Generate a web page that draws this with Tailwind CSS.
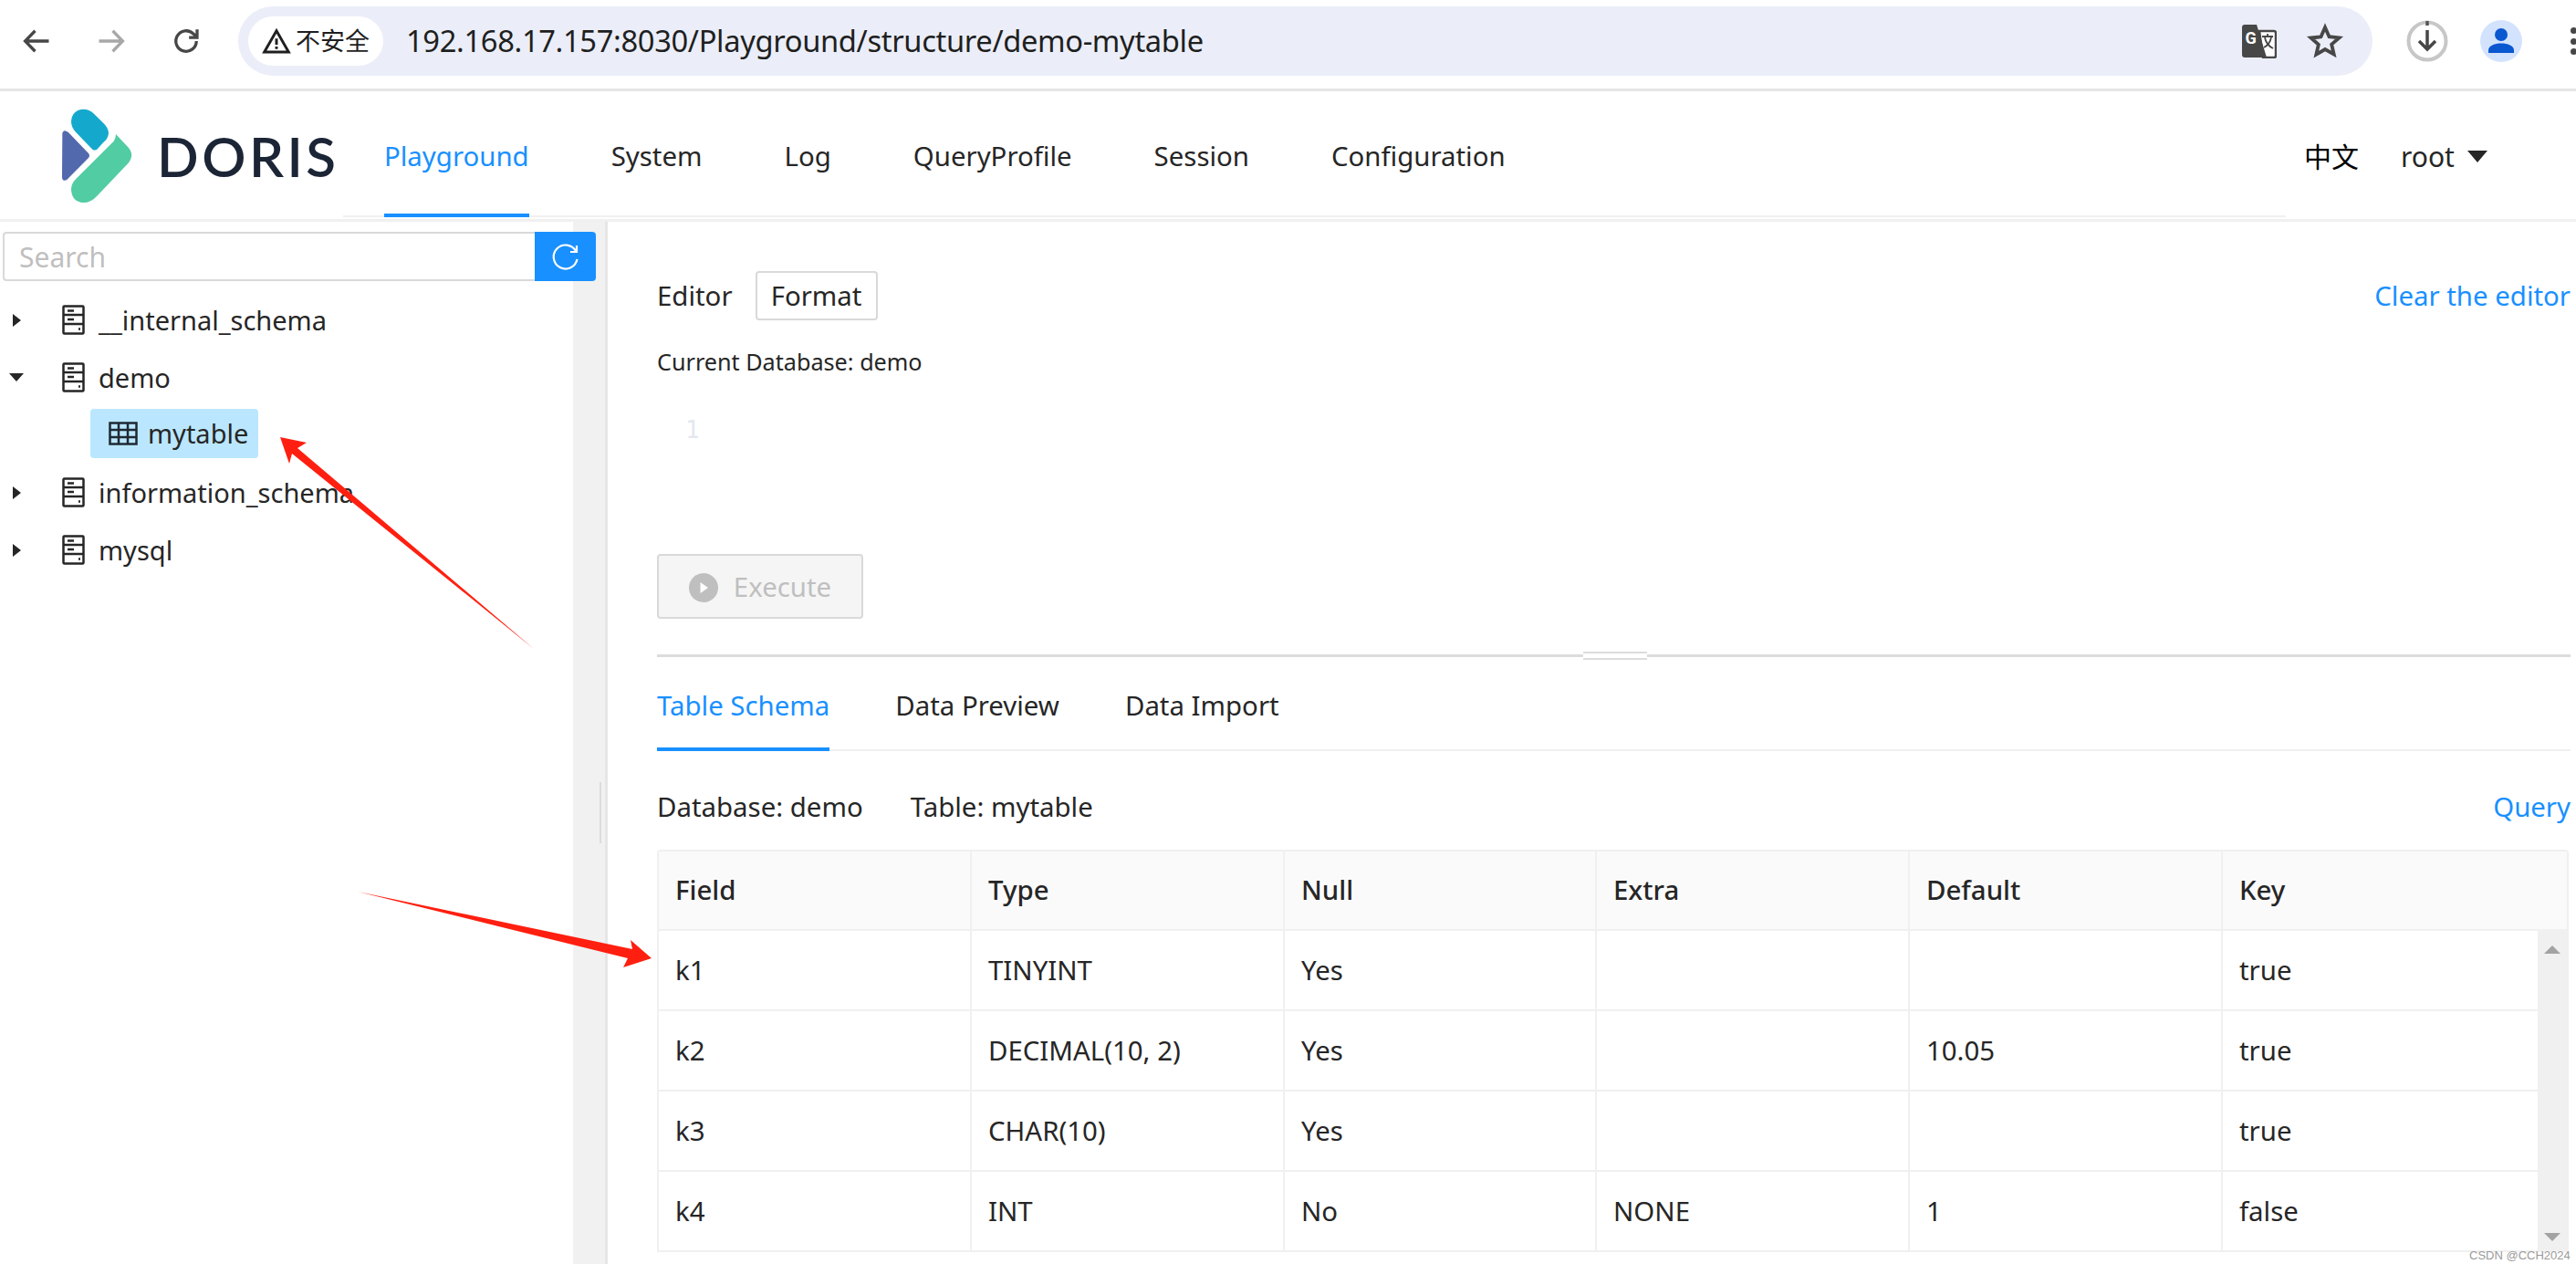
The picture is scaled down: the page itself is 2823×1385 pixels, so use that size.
<!DOCTYPE html>
<html lang="zh-CN">
<head>
<meta charset="UTF-8">
<title>Doris Playground</title>
<script src="https://cdn.jsdelivr.net/npm/@tailwindcss/browser@4"></script>
</head>
<body class="bg-white">
<div class="relative w-[2823px] h-[1385px] overflow-hidden flex flex-col text-[#262626] font-[family-name:'Noto_Sans','Noto_Sans_CJK_SC',sans-serif]">

  <!-- browser toolbar -->
  <div class="h-[100px] shrink-0 border-b-[3px] border-[#e6e6e6] flex items-start pt-[7px] pl-[22px]">
    <div class="w-[239px] h-[76px] flex items-center gap-[46px] shrink-0">
      <svg class="w-[36px] h-[36px]" viewBox="0 0 24 24" fill="none" stroke="#474747" stroke-width="2.2"><path d="M21 12H4M11 4.5 3.7 12l7.3 7.5"/></svg>
      <svg class="w-[36px] h-[36px]" viewBox="0 0 24 24" fill="none" stroke="#a8a8a8" stroke-width="2.2"><path d="M3 12h17M13 4.5l7.3 7.5-7.3 7.5"/></svg>
      <svg class="w-[36px] h-[36px]" viewBox="0 0 24 24" fill="none" stroke="#474747" stroke-width="2.2"><path d="M19.5 12a7.5 7.5 0 1 1-2.2-5.3L20 9.2M20 3.5v5.9h-5.9"/></svg>
    </div>
    <div class="w-[2339px] h-[76px] shrink-0 rounded-full bg-[#ebeef8] flex items-center pl-[11px] pr-[31px]">
      <div class="w-[148px] h-[54px] rounded-full bg-white flex items-center justify-center gap-[5px] text-[27px] text-[#1f1f1f]">
        <svg class="w-[32px] h-[30px]" viewBox="0 0 24 22" fill="none" stroke="#1f1f1f" stroke-width="2.2"><path d="M12 2.5 22 20H2Z"/><path d="M12 9v5M12 15.5v2"/></svg>
        <span>不安全</span>
      </div>
      <span class="ml-[25px] text-[32.7px] tracking-[-0.35px] text-[#1f1f1f]">192.168.17.157:8030/Playground/structure/demo-mytable</span>
      <svg class="ml-auto w-[38px] h-[38px]" viewBox="0 0 38 38">
        <path d="M19 8h16a2 2 0 0 1 2 2v25a2 2 0 0 1-2 2h-12Z" fill="#fff" stroke="#474747" stroke-width="2.5"/>
        <path d="M3 1h13l11 36H3a3 3 0 0 1-3-3V4a3 3 0 0 1 3-3Z" fill="#474747"/>
        <text x="3.500" y="22" font-size="18" font-weight="700" fill="#fff" font-family="Roboto, sans-serif">G</text>
        <path d="M22 14h12M28 11v3M25 15c1 6 5 10 9 12M32 15c-1 5-4 9-8 11" fill="none" stroke="#474747" stroke-width="1.8"/>
      </svg>
      <svg class="ml-[32px] w-[42px] h-[40px]" viewBox="0 0 24 24" fill="none" stroke="#474747" stroke-width="2.3"><path d="m12 3 2.7 6.1 6.6.7-5 4.4 1.5 6.5L12 17.4l-5.800 3.400 1.500-6.500-5-4.400 6.600-.7Z"/></svg>
    </div>
    <div class="w-[161px] h-[76px] shrink-0 flex items-center pl-[37px] gap-[35px]">
      <svg class="w-[46px] h-[46px] shrink-0" viewBox="0 0 46 46"><circle cx="23" cy="23" r="20.5" fill="none" stroke="#c7c7c7" stroke-width="4"/><path d="M23 1v5" stroke="#555" stroke-width="3.5"/><path d="M23 11v21M14 23l9 9 9-9" fill="none" stroke="#474747" stroke-width="3.5"/></svg>
      <svg class="w-[46px] h-[46px] shrink-0" viewBox="0 0 46 46"><circle cx="23" cy="23" r="23" fill="#d3e3fd"/><circle cx="23" cy="16" r="7" fill="#0b57d0"/><path d="M9 36v-3c0-5 7-7.500 14-7.500S37 28 37 33v3Z" fill="#0b57d0"/></svg>
    </div>
    <div class="ml-[56px] h-[76px] flex flex-col justify-center gap-[4.5px] shrink-0">
      <span class="block w-[7px] h-[7px] rounded-full bg-[#474747]"></span>
      <span class="block w-[7px] h-[7px] rounded-full bg-[#474747]"></span>
      <span class="block w-[7px] h-[7px] rounded-full bg-[#474747]"></span>
    </div>
  </div>

  <!-- app header -->
  <header class="h-[143px] shrink-0 border-b-[3px] border-[#f0f0f0] flex items-start">
    <div class="w-[376px] h-[138px] shrink-0 flex items-center">
      <svg class="ml-[68px] mt-[3px] w-[78px] h-[104px] shrink-0" viewBox="145 58 234 312">
        <path d="M215 60Q235 60 250 75L285 110Q298 125 298 140Q296 158 280 170L262 190Q255 198 245 192L190 135Q175 120 175 100Q178 62 215 60Z" fill="#14a9cc"/>
        <path d="M322 142 362 185Q385 210 362 238L260 345Q240 367 215 367Q178 365 175 325Q175 305 190 290L315 165Q322 155 322 142Z" fill="#52cca3"/>
        <path d="M155 131Q150 130 146 138L145 285Q147 298 160 293L232 220Q238 212 232 205L165 135Z" fill="#5369ae"/>
      </svg>
      <span class="ml-[26px] mt-[3px] text-[60px] leading-none font-semibold tracking-[3.5px] text-[#1c2536] font-[family-name:Lato,sans-serif]">DORIS</span>
    </div>
    <nav class="w-[2129px] h-[138px] shrink-0 border-b-2 border-[#f0f0f0] flex items-stretch pl-[45px] gap-[90px] text-[29.4px]">
      <a class="flex items-center h-[138px] pt-[9px] border-b-4 border-[#1890ff] text-[#1890ff]">Playground</a>
      <a class="flex items-center h-[138px] pt-[5px]">System</a>
      <a class="flex items-center h-[138px] pt-[5px]">Log</a>
      <a class="flex items-center h-[138px] pt-[5px]">QueryProfile</a>
      <a class="flex items-center h-[138px] pt-[5px]">Session</a>
      <a class="flex items-center h-[138px] pt-[5px]">Configuration</a>
    </nav>
    <div class="h-[138px] flex items-center pl-[20px] pt-[4px] text-[30px]">
      <span class="text-black">中文</span>
      <span class="ml-[46px]">root</span>
      <span class="ml-[14px] w-0 h-0 border-x-[11px] border-x-transparent border-t-[13px] border-t-[#262626]"></span>
    </div>
  </header>

  <main class="flex-1 flex min-h-0">
    <!-- sidebar -->
    <aside class="w-[666px] shrink-0 flex border-r-[3px] border-[#e6e6e6]">
      <div class="w-[628px] shrink-0 pt-[11px] pl-[3px] text-[29px]">
        <div class="relative z-10 flex w-[650px] h-[54px] text-[30px]">
          <div class="w-[583px] border-2 border-r-0 border-[#d9d9d9] rounded-l-[4px] bg-white flex items-center pl-[16px] text-[#bfbfbf]">Search</div>
          <div class="w-[67px] bg-[#1890ff] rounded-r-[4px] flex items-center justify-center">
            <svg class="w-[32px] h-[32px]" viewBox="0 0 32 32" fill="none" stroke="#fff" stroke-width="2.2"><path d="M27 10a13 13 0 1 0 1.500 9"/><path d="M28 4v7h-7"/></svg>
          </div>
        </div>
        <ul class="mt-[11px] -ml-[3px]">
          <li class="h-[63px] flex items-center">
            <span class="ml-[14px] w-0 h-0 border-y-[7px] border-y-transparent border-l-[9px] border-l-[#262626]"></span>
            <svg class="ml-[45px] w-[25px] h-[33px] shrink-0" viewBox="0 0 25 33" fill="none" stroke="#262626" stroke-width="2.500"><rect x="1.500" y="1.500" width="22" height="30" rx="1"/><path d="M1.500 11h22M1.500 21h22M6 6.500h7M6 16h7"/><path d="M18 26.500h2"/></svg>
            <span class="ml-[15px]">__internal_schema</span>
          </li>
          <li class="h-[63px] flex items-center">
            <span class="ml-[10px] w-0 h-0 border-x-[8px] border-x-transparent border-t-[9px] border-t-[#262626]"></span>
            <svg class="ml-[42px] w-[25px] h-[33px] shrink-0" viewBox="0 0 25 33" fill="none" stroke="#262626" stroke-width="2.500"><rect x="1.500" y="1.500" width="22" height="30" rx="1"/><path d="M1.500 11h22M1.500 21h22M6 6.500h7M6 16h7"/><path d="M18 26.500h2"/></svg>
            <span class="ml-[15px]">demo</span>
          </li>
          <li class="h-[63px] flex items-center pl-[99px]">
            <div class="-mt-[3px] w-[184px] h-[54px] rounded-[4px] bg-[#bae7ff] flex items-center pl-[20px]">
              <svg class="w-[32px] h-[26px] shrink-0" viewBox="0 0 32 26" fill="none" stroke="#1f2933" stroke-width="2.500"><rect x="1.500" y="1.500" width="29" height="23"/><path d="M1.500 9h29M1.500 17h29M11 1.500v23M21 1.500v23"/></svg>
              <span class="ml-[11px]">mytable</span>
            </div>
          </li>
          <li class="h-[63px] flex items-center">
            <span class="ml-[14px] w-0 h-0 border-y-[7px] border-y-transparent border-l-[9px] border-l-[#262626]"></span>
            <svg class="ml-[45px] w-[25px] h-[33px] shrink-0" viewBox="0 0 25 33" fill="none" stroke="#262626" stroke-width="2.500"><rect x="1.500" y="1.500" width="22" height="30" rx="1"/><path d="M1.500 11h22M1.500 21h22M6 6.500h7M6 16h7"/><path d="M18 26.500h2"/></svg>
            <span class="ml-[15px]">information_schema</span>
          </li>
          <li class="h-[63px] flex items-center">
            <span class="ml-[14px] w-0 h-0 border-y-[7px] border-y-transparent border-l-[9px] border-l-[#262626]"></span>
            <svg class="ml-[45px] w-[25px] h-[33px] shrink-0" viewBox="0 0 25 33" fill="none" stroke="#262626" stroke-width="2.500"><rect x="1.500" y="1.500" width="22" height="30" rx="1"/><path d="M1.500 11h22M1.500 21h22M6 6.500h7M6 16h7"/><path d="M18 26.500h2"/></svg>
            <span class="ml-[15px]">mysql</span>
          </li>
        </ul>
      </div>
      <div class="w-[35px] shrink-0 bg-[#f1f1f1] relative">
        <span class="absolute left-[29px] top-[614px] w-[2px] h-[67px] bg-[#dcdcdc]"></span>
      </div>
    </aside>

    <!-- content -->
    <section class="flex-1 min-w-0 pl-[54px] pr-[6px] pt-[54px] flex flex-col text-[29.4px]">
      <div class="h-[54px] flex items-center justify-between">
        <div class="flex items-center">
          <span>Editor</span>
          <span class="ml-[25px] w-[134px] h-[54px] flex items-center justify-center border-2 border-[#d9d9d9] rounded-[4px]">Format</span>
        </div>
        <a class="text-[#1890ff]">Clear the editor</a>
      </div>
      <div class="mt-[27px] h-[36px] leading-[36px] text-[25.2px]">Current Database: demo</div>
      <div class="h-[193px] pt-[39px] pl-[31px] leading-[36px] text-[26px] text-[#e3e8ef] font-[family-name:'DejaVu_Sans_Mono',monospace]">1</div>
      <div class="w-[226px] h-[71px] flex items-center justify-center gap-[17px] pt-[2px] border-2 border-[#d9d9d9] rounded-[4px] bg-[#f5f5f5] text-[#bfbfbf]">
        <svg class="w-[32px] h-[32px]" viewBox="0 0 32 32"><circle cx="16" cy="16" r="16" fill="#bfbfbf"/><path d="M12.500 10 21 16l-8.500 6Z" fill="#fff"/></svg>
        <span>Execute</span>
      </div>

      <!-- splitter -->
      <div class="relative mt-[39px] h-[3px] shrink-0 bg-[#dcdcdc]">
        <div class="absolute left-[1015px] -top-[8px] w-[70px] h-[19px] bg-white flex flex-col justify-center gap-[5px]">
          <span class="h-[2px] bg-[#dcdcdc]"></span>
          <span class="h-[2px] bg-[#dcdcdc]"></span>
        </div>
      </div>

      <!-- tabs -->
      <div class="h-[103px] shrink-0 border-b-2 border-[#f0f0f0] flex gap-[72px]">
        <a class="h-[103px] flex items-center pt-[7px] border-b-4 border-[#1890ff] text-[#1890ff]">Table Schema</a>
        <a class="h-[103px] flex items-center pt-[3px]">Data Preview</a>
        <a class="h-[103px] flex items-center pt-[3px]">Data Import</a>
      </div>

      <div class="h-[108px] shrink-0 flex items-center justify-between pt-[14px]">
        <div class="flex gap-[52px]">
          <span>Database: demo</span>
          <span>Table: mytable</span>
        </div>
        <a class="text-[#1890ff]">Query</a>
      </div>

      <!-- schema table -->
      <div class="w-[2095px] border-2 border-[#f0f0f0] rounded-t-[4px] border-b-0 text-[29.4px]">
        <div class="h-[87px] grid grid-cols-[343px_343px_342px_343px_343px_1fr] bg-[#fafafa] border-b-2 border-[#f0f0f0] font-medium">
          <div class="flex items-center pl-[18px] border-r-2 border-[#f0f0f0]">Field</div>
          <div class="flex items-center pl-[18px] border-r-2 border-[#f0f0f0]">Type</div>
          <div class="flex items-center pl-[18px] border-r-2 border-[#f0f0f0]">Null</div>
          <div class="flex items-center pl-[18px] border-r-2 border-[#f0f0f0]">Extra</div>
          <div class="flex items-center pl-[18px] border-r-2 border-[#f0f0f0]">Default</div>
          <div class="flex items-center pl-[18px]">Key</div>
        </div>
        <div class="flex">
          <div class="flex-1 min-w-0 grid grid-cols-[343px_343px_342px_343px_343px_1fr] auto-rows-[88px]">
            <div class="flex items-center pl-[18px] border-r-2 border-b-2 border-[#f0f0f0]">k1</div>
            <div class="flex items-center pl-[18px] border-r-2 border-b-2 border-[#f0f0f0]">TINYINT</div>
            <div class="flex items-center pl-[18px] border-r-2 border-b-2 border-[#f0f0f0]">Yes</div>
            <div class="flex items-center pl-[18px] border-r-2 border-b-2 border-[#f0f0f0]"></div>
            <div class="flex items-center pl-[18px] border-r-2 border-b-2 border-[#f0f0f0]"></div>
            <div class="flex items-center pl-[18px] border-b-2 border-[#f0f0f0]">true</div>
            <div class="flex items-center pl-[18px] border-r-2 border-b-2 border-[#f0f0f0]">k2</div>
            <div class="flex items-center pl-[18px] border-r-2 border-b-2 border-[#f0f0f0]">DECIMAL(10, 2)</div>
            <div class="flex items-center pl-[18px] border-r-2 border-b-2 border-[#f0f0f0]">Yes</div>
            <div class="flex items-center pl-[18px] border-r-2 border-b-2 border-[#f0f0f0]"></div>
            <div class="flex items-center pl-[18px] border-r-2 border-b-2 border-[#f0f0f0]">10.05</div>
            <div class="flex items-center pl-[18px] border-b-2 border-[#f0f0f0]">true</div>
            <div class="flex items-center pl-[18px] border-r-2 border-b-2 border-[#f0f0f0]">k3</div>
            <div class="flex items-center pl-[18px] border-r-2 border-b-2 border-[#f0f0f0]">CHAR(10)</div>
            <div class="flex items-center pl-[18px] border-r-2 border-b-2 border-[#f0f0f0]">Yes</div>
            <div class="flex items-center pl-[18px] border-r-2 border-b-2 border-[#f0f0f0]"></div>
            <div class="flex items-center pl-[18px] border-r-2 border-b-2 border-[#f0f0f0]"></div>
            <div class="flex items-center pl-[18px] border-b-2 border-[#f0f0f0]">true</div>
            <div class="flex items-center pl-[18px] border-r-2 border-b-2 border-[#f0f0f0]">k4</div>
            <div class="flex items-center pl-[18px] border-r-2 border-b-2 border-[#f0f0f0]">INT</div>
            <div class="flex items-center pl-[18px] border-r-2 border-b-2 border-[#f0f0f0]">No</div>
            <div class="flex items-center pl-[18px] border-r-2 border-b-2 border-[#f0f0f0]">NONE</div>
            <div class="flex items-center pl-[18px] border-r-2 border-b-2 border-[#f0f0f0]">1</div>
            <div class="flex items-center pl-[18px] border-b-2 border-[#f0f0f0]">false</div>
          </div>
          <div class="w-[32px] shrink-0 bg-[#f0f0f0] flex flex-col items-center justify-between pt-[16px] pb-[12px]">
            <span class="w-0 h-0 border-x-[9px] border-x-transparent border-b-[9px] border-b-[#a3a3a3]"></span>
            <span class="w-0 h-0 border-x-[9px] border-x-transparent border-t-[9px] border-t-[#a3a3a3]"></span>
          </div>
        </div>
      </div>
    </section>
  </main>

  <!-- red annotation arrows and watermark over the screenshot -->
  <svg class="absolute left-0 top-0 w-[2823px] h-[1385px] pointer-events-none" viewBox="0 0 2823 1385">
    <path d="M307 479 336 485 326 491 585 711 320 497 317 508Z" fill="#ff1f10"/>
    <path d="M392 977 693 1040 691 1030 714 1050 683 1060 688 1050Z" fill="#ff1f10"/>
  </svg>
  <span class="absolute left-[2706px] top-[1368px] whitespace-nowrap text-[13px] leading-[16px] text-[#9a9a9a] font-[family-name:'Liberation_Sans',sans-serif]">CSDN @CCH2024</span>
</div>
</body>
</html>
